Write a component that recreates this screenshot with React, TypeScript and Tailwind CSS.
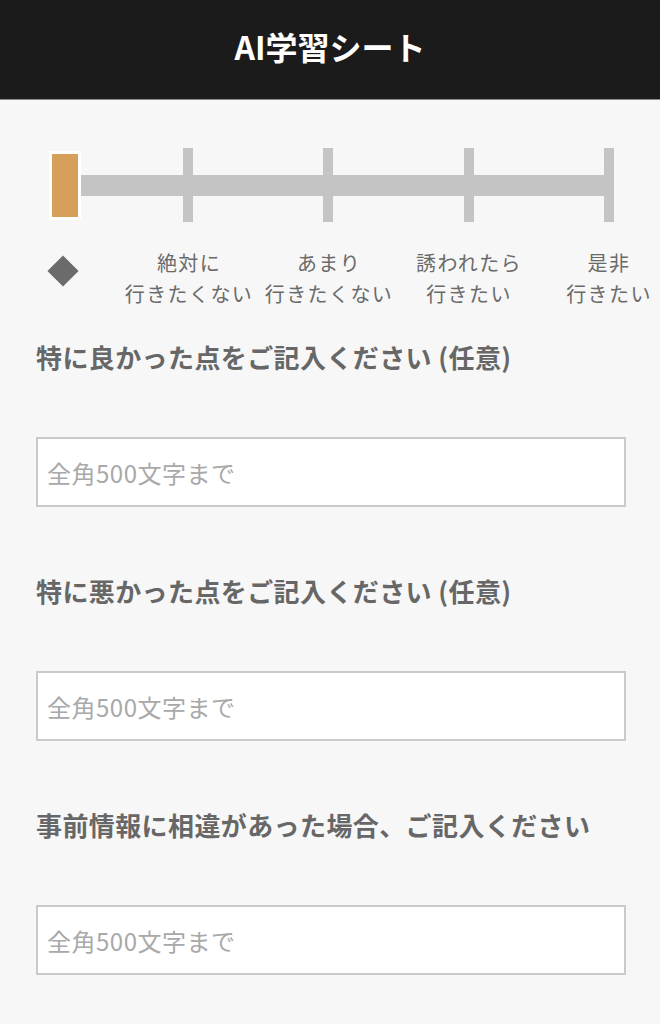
import React from "react";

const FONT = { fontFamily: '"Noto Sans CJK JP", "Noto Sans", sans-serif' };

const labels: [string, string][] = [
  ["絶対に", "行きたくない"],
  ["あまり", "行きたくない"],
  ["誘われたら", "行きたい"],
  ["是非", "行きたい"],
];

function Field({ title, first }: { title: string; first?: boolean }) {
  return (
    <div className={first ? "mt-[30px]" : "mt-[66px]"}>
      <h2 className="text-[26px] leading-[36px] font-bold tracking-[0.4px] text-[#676767]">{title}</h2>
      <input
        readOnly
        placeholder="全角500文字まで"
        className="mt-[62px] block w-[590px] h-[70px] bg-white border-2 border-[#cacaca] pl-[9px] text-[24px] tracking-[0.5px] text-[#555] placeholder:text-[#a9a9a9] outline-none"
      />
    </div>
  );
}

export default function App() {
  return (
    <div className="min-h-[1024px] w-[660px] overflow-hidden bg-[#f7f7f7]" style={FONT}>
      <header className="h-[100px] bg-[#1b1b1b] border-b border-[#8c8c8c] flex items-center justify-center">
        <h1 className="text-white text-[32px] font-bold leading-none -mt-[8px]">AI学習シート</h1>
      </header>

      <div className="pl-[49px] pt-[48px]">
        <div className="flex items-center h-[74px]">
          <div className="w-[32px] h-[69px] bg-white p-[3px] shrink-0">
            <div className="w-full h-full bg-[#d69f5a]" />
          </div>
          <div className="w-[102px] h-[21px] bg-[#c4c4c4]" />
          <div className="w-[10px] h-[74px] bg-[#c4c4c4]" />
          <div className="w-[130px] h-[21px] bg-[#c4c4c4]" />
          <div className="w-[10px] h-[74px] bg-[#c4c4c4]" />
          <div className="w-[131px] h-[21px] bg-[#c4c4c4]" />
          <div className="w-[10px] h-[74px] bg-[#c4c4c4]" />
          <div className="w-[130px] h-[21px] bg-[#c4c4c4]" />
          <div className="w-[10px] h-[74px] bg-[#c4c4c4]" />
        </div>
      </div>

      <div className="flex items-start pl-[47px] mt-[25px]">
        <div className="w-[32px] h-[32px] mt-[8px] flex items-center justify-center shrink-0">
          <div className="w-[22px] h-[22px] rotate-45 bg-[#6b6b6b]" />
        </div>
        <div className="w-[40px] shrink-0" />
        {labels.map(([a, b]) => (
          <div
            key={a + b}
            className="w-[140px] shrink-0 text-center text-[20px] leading-[31px] tracking-[1.4px] text-[#6a6a6a]"
          >
            <div>{a}</div>
            <div>{b}</div>
          </div>
        ))}
      </div>

      <div className="pl-[36px]">
        <Field first title="特に良かった点をご記入ください (任意)" />
        <Field title="特に悪かった点をご記入ください (任意)" />
        <Field title="事前情報に相違があった場合、ご記入ください" />
      </div>
    </div>
  );
}
